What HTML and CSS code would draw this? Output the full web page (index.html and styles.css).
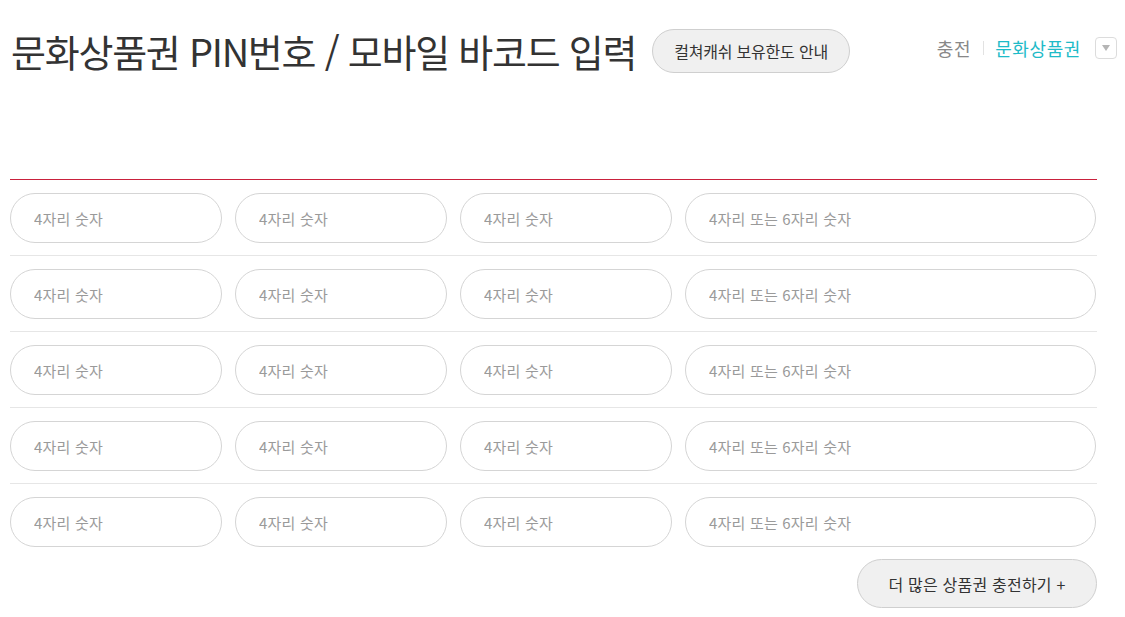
FILE: index.html
```html
<!DOCTYPE html>
<html lang="ko">
<head>
<meta charset="utf-8">
<link rel="stylesheet" href="styles.css">
</head>
<body>
<div class="page">
  <header class="head">
    <div class="head-left">
      <h1 class="title">문화상품권 PIN번호 / 모바일 바코드 입력</h1>
      <button class="pill-btn guide">컬쳐캐쉬 보유한도 안내</button>
    </div>
    <nav class="crumb">
      <span class="crumb-item">충전</span>
      <span class="crumb-sep"></span>
      <span class="crumb-item active">문화상품권</span>
      <span class="crumb-drop"><svg width="10" height="8" viewBox="0 0 10 8"><path d="M1 1h8L5 7z" fill="#b5b5b5"/></svg></span>
    </nav>
  </header>

  <div class="pins">
    <div class="pin-row">
      <input class="pin" placeholder="4자리 숫자"><input class="pin" placeholder="4자리 숫자"><input class="pin" placeholder="4자리 숫자"><input class="pin wide" placeholder="4자리 또는 6자리 숫자">
    </div>
    <div class="pin-row">
      <input class="pin" placeholder="4자리 숫자"><input class="pin" placeholder="4자리 숫자"><input class="pin" placeholder="4자리 숫자"><input class="pin wide" placeholder="4자리 또는 6자리 숫자">
    </div>
    <div class="pin-row">
      <input class="pin" placeholder="4자리 숫자"><input class="pin" placeholder="4자리 숫자"><input class="pin" placeholder="4자리 숫자"><input class="pin wide" placeholder="4자리 또는 6자리 숫자">
    </div>
    <div class="pin-row">
      <input class="pin" placeholder="4자리 숫자"><input class="pin" placeholder="4자리 숫자"><input class="pin" placeholder="4자리 숫자"><input class="pin wide" placeholder="4자리 또는 6자리 숫자">
    </div>
    <div class="pin-row last">
      <input class="pin" placeholder="4자리 숫자"><input class="pin" placeholder="4자리 숫자"><input class="pin" placeholder="4자리 숫자"><input class="pin wide" placeholder="4자리 또는 6자리 숫자">
    </div>
  </div>

  <div class="more">
    <button class="pill-btn more-btn">더 많은 상품권 충전하기 +</button>
  </div>
</div>
</body>
</html>
```
FILE: styles.css
```css
* { box-sizing: border-box; }
html, body { margin: 0; padding: 0; background: #fff; }
body {
  font-family: "Noto Sans CJK KR", "Noto Sans", sans-serif;
  color: #333;
}
.page {
  width: 1087px;
  margin-left: 10px;
}
.head {
  display: flex;
  justify-content: space-between;
  align-items: flex-start;
  height: 180px;
  border-bottom: 1px solid #c9213d;
}
.head-left {
  display: flex;
  align-items: center;
  gap: 16px;
  padding-top: 29px;
}
.title {
  margin: 0;
  font-size: 38px;
  font-weight: 400;
  letter-spacing: -1.25px;
  color: #333;
  line-height: 42px;
  padding-left: 1px;
}
.pill-btn {
  font-family: "Noto Sans CJK KR", "Noto Sans", sans-serif;
  background: #f0f0f0;
  border: 1px solid #cfcfcf;
  border-radius: 30px;
  color: #333;
  cursor: pointer;
}
.guide {
  height: 44px;
  padding: 0 21px;
  font-size: 16px;
  letter-spacing: -0.2px;
}
.crumb {
  display: flex;
  align-items: center;
  padding-top: 37px;
  font-size: 18px;
  letter-spacing: 0.6px;
}
.crumb-item { color: #888; line-height: 22px; }
.crumb-item.active { color: #1ebbc8; }
.crumb-sep {
  width: 1px;
  height: 14px;
  background: #e2e2e2;
  margin: 0 11px 0 12px;
}
.crumb-drop {
  margin-left: 14px;
  margin-right: -20px;
  width: 22px;
  height: 22px;
  border: 1px solid #dcdcdc;
  border-radius: 4px;
  display: flex;
  align-items: center;
  justify-content: center;
}
.pins { display: flex; flex-direction: column; }
.pin-row {
  display: flex;
  gap: 13px;
  padding: 13px 0 12px;
  border-bottom: 1px solid #e6e6e6;
}
.pin-row.last { border-bottom: none; padding-bottom: 12px; }
.pin {
  width: 212px;
  height: 50px;
  border: 1px solid #d5d5d5;
  border-radius: 25px;
  padding: 0 0 0 23px;
  font-family: "Noto Sans CJK KR", "Noto Sans", sans-serif;
  font-size: 15px;
  letter-spacing: 0.2px;
  color: #333;
  background: #fff;
  outline: none;
}
.pin::placeholder { color: #9a9a9a; }
.pin.wide { width: 411px; }
.more {
  display: flex;
  justify-content: flex-end;
}
.more-btn {
  width: 240px;
  height: 49px;
  font-size: 16px;
  letter-spacing: 0.2px;
}
```
